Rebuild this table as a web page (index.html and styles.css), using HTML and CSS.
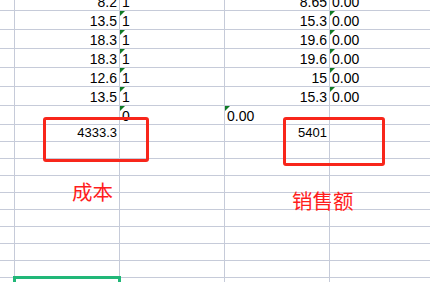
FILE: index.html
```html
<!DOCTYPE html>
<html lang="zh-CN">
<head>
<meta charset="utf-8">
<title>成本与销售额</title>
<link rel="stylesheet" href="styles.css">
</head>
<body>
<div class="sheet">
  <div class="grid">
    <div class="row">
      <div class="c"></div><div class="c num">8.2</div><div class="c txt flag">1</div><div class="c num">8.65</div><div class="c txt flag">0.00</div>
    </div>
    <div class="row">
      <div class="c"></div><div class="c num">13.5</div><div class="c txt flag">1</div><div class="c num">15.3</div><div class="c txt flag">0.00</div>
    </div>
    <div class="row">
      <div class="c"></div><div class="c num">18.3</div><div class="c txt flag">1</div><div class="c num">19.6</div><div class="c txt flag">0.00</div>
    </div>
    <div class="row">
      <div class="c"></div><div class="c num">18.3</div><div class="c txt flag">1</div><div class="c num">19.6</div><div class="c txt flag">0.00</div>
    </div>
    <div class="row">
      <div class="c"></div><div class="c num">12.6</div><div class="c txt flag">1</div><div class="c num">15</div><div class="c txt flag">0.00</div>
    </div>
    <div class="row">
      <div class="c"></div><div class="c num">13.5</div><div class="c txt flag">1</div><div class="c num">15.3</div><div class="c txt flag">0.00</div>
    </div>
    <div class="row">
      <div class="c"></div><div class="c"></div><div class="c txt flag">0</div><div class="c txt flag">0.00</div><div class="c"></div>
    </div>
    <div class="row short">
      <div class="c"></div><div class="c num">4333.3</div><div class="c"></div><div class="c num">5401</div><div class="c"></div>
    </div>
    <div class="row short"><div class="c"></div><div class="c"></div><div class="c"></div><div class="c"></div><div class="c"></div></div>
    <div class="row short"><div class="c"></div><div class="c"></div><div class="c"></div><div class="c"></div><div class="c"></div></div>
    <div class="row short"><div class="c"></div><div class="c"></div><div class="c"></div><div class="c"></div><div class="c"></div></div>
    <div class="row short"><div class="c"></div><div class="c"></div><div class="c"></div><div class="c"></div><div class="c"></div></div>
    <div class="row short"><div class="c"></div><div class="c"></div><div class="c"></div><div class="c"></div><div class="c"></div></div>
    <div class="row short"><div class="c"></div><div class="c"></div><div class="c"></div><div class="c"></div><div class="c"></div></div>
    <div class="row short"><div class="c"></div><div class="c"></div><div class="c"></div><div class="c"></div><div class="c"></div></div>
    <div class="row short"><div class="c"></div><div class="c"></div><div class="c"></div><div class="c"></div><div class="c"></div></div>
    <div class="row short"><div class="c"></div><div class="c"></div><div class="c"></div><div class="c"></div><div class="c"></div></div>
  </div>

  <!-- floating shapes and text boxes drawn over the sheet -->
  <div class="shape shape-cost"></div>
  <div class="shape shape-sales"></div>
  <div class="note note-cost">成本</div>
  <div class="note note-sales">销售额</div>

  <!-- active cell -->
  <div class="selection"></div>
</div>
</body>
</html>
```

FILE: styles.css
```css
* {
  box-sizing: border-box;
  margin: 0;
  padding: 0;
}

html,
body {
  width: 430px;
  height: 282px;
  overflow: hidden;
  background: #ffffff;
}

.sheet {
  position: relative;
  width: 430px;
  height: 282px;
  overflow: hidden;
  font-family: "Liberation Sans", Arial, sans-serif;
  color: #000000;
}

/* worksheet grid, scrolled a few pixels past the top row */
.grid {
  margin-top: -8px;
}

.row {
  display: grid;
  grid-template-columns: 15px repeat(4, 105px);
  height: 19px;
}

.row.short {
  height: 17px;
}

.c {
  position: relative;
  border-right: 1px solid #c6cbd9;
  border-bottom: 1px solid #c6cbd9;
  padding: 2px 2px 0;
  font-size: 14px;
  line-height: 16px;
  white-space: nowrap;
  overflow: hidden;
}

.short .c {
  padding-top: 0;
  font-size: 13px;
}

.num {
  text-align: right;
}

.txt {
  text-align: left;
}

/* "number stored as text" marker */
.flag::before {
  content: "";
  position: absolute;
  left: 0;
  top: 0;
  width: 0;
  height: 0;
  border-top: 5px solid #0f7a24;
  border-right: 5px solid transparent;
}

/* red rounded rectangles */
.shape {
  position: absolute;
  border: 3px solid #f8261b;
  border-radius: 3px;
}

.shape-cost {
  left: 43px;
  top: 117px;
  width: 106px;
  height: 45px;
}

.shape-sales {
  left: 283px;
  top: 117px;
  width: 102px;
  height: 49px;
}

/* floating text boxes */
.note {
  position: absolute;
  font-family: "Noto Sans CJK SC", "Noto Sans CJK TC", sans-serif;
  font-size: 20.5px;
  line-height: 1;
  color: #ff1d1d;
  white-space: nowrap;
}

.note-cost {
  left: 72px;
  top: 181px;
}

.note-sales {
  left: 292px;
  top: 190px;
}

/* active cell border */
.selection {
  position: absolute;
  left: 13px;
  top: 276px;
  width: 108px;
  height: 21px;
  border: 3px solid #21b778;
}
```
